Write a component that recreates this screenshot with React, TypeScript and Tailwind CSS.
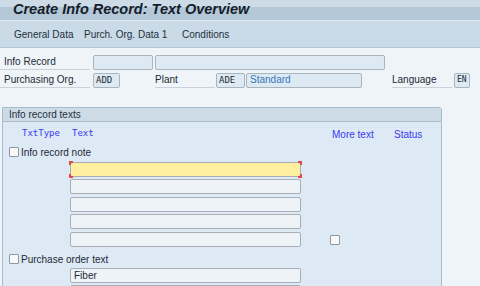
const sans = "font-['Liberation_Sans',Arial,sans-serif]";
const mono = "font-['DejaVu_Sans_Mono','Liberation_Mono',monospace]";

function Field({ w, tone = "edit", children }: { w: string; tone?: "edit" | "display" | "focus"; children?: any }) {
  const bg =
    tone === "display"
      ? "bg-[#dde9f3] border-[#aab4bd]"
      : tone === "focus"
      ? "bg-[#fff0a0] border-[#a8aeb4]"
      : "bg-[#eef3f7] border-[#a8aeb4]";
  return (
    <div className={`relative h-[15px] ${w} shrink-0 border rounded-[2px] ${bg} flex items-center px-[2px] text-[10px] leading-none`}>
      {children}
      {tone === "focus" && (
        <>
          <span className="absolute -left-[2px] -top-[2px] w-[4px] h-[4px] border-t-2 border-l-2 border-[#e04848]" />
          <span className="absolute -right-[2px] -top-[2px] w-[4px] h-[4px] border-t-2 border-r-2 border-[#e04848]" />
          <span className="absolute -left-[2px] -bottom-[2px] w-[4px] h-[4px] border-b-2 border-l-2 border-[#e04848]" />
          <span className="absolute -right-[2px] -bottom-[2px] w-[4px] h-[4px] border-b-2 border-r-2 border-[#e04848]" />
        </>
      )}
    </div>
  );
}

function Check() {
  return <div className="w-[10px] h-[10px] shrink-0 border border-[#8d98a2] bg-[#f7f9fb] rounded-[1px]" />;
}

function Label({ w, children }: { w: string; children: any }) {
  return (
    <div className={`${w} shrink-0 h-[16px] flex items-center border-b border-[#c9d2da] text-[10px] text-[#1c2a36]`}>
      {children}
    </div>
  );
}

export default function App() {
  return (
    <div className={`w-[480px] h-[286px] overflow-hidden bg-[#eff4f8] ${sans} text-[#1c2a36]`}>
      {/* TITLE */}
      <div className="h-[21px] border-b border-[#e4ecf2] bg-[linear-gradient(to_bottom,#cddbe7_0px,#cddbe7_7px,#b4c8d8_7px,#b4c8d8_20px)] flex items-center pl-[13px]">
        <span className="text-[14.5px] font-bold italic text-[#15202b] leading-none -mt-[2px]">
          Create Info Record: Text Overview
        </span>
      </div>

      {/* TOOLBAR */}
      <div className="h-[27px] bg-[#cadae6] border-b border-[#b5c7d6] flex items-center pl-[14px] text-[10px] text-[#23313e]">
        <span className="w-[70px]">General Data</span>
        <span className="w-[98px]">Purch. Org. Data 1</span>
        <span>Conditions</span>
      </div>

      {/* HEADER FIELDS */}
      <div className="pt-[6px] flex flex-col gap-[2px]">
        <div className="flex items-center h-[16px]">
          <Label w="w-[90px] pl-[4px]">Info Record</Label>
          <div className="ml-[3px]"><Field w="w-[60px]" tone="display" /></div>
          <div className="ml-[2px]"><Field w="w-[230px]" tone="display" /></div>
        </div>
        <div className="flex items-center h-[16px]">
          <Label w="w-[90px] pl-[4px]">Purchasing Org.</Label>
          <div className="ml-[3px]">
            <Field w="w-[27px]" tone="display"><span className={`${mono} text-[9px] text-[#1c2a36]`}>ADD</span></Field>
          </div>
          <div className="ml-[35px]"><Label w="w-[60px]">Plant</Label></div>
          <div className="ml-[1px]">
            <Field w="w-[29px]" tone="display"><span className={`${mono} text-[9px] text-[#1c2a36]`}>ADE</span></Field>
          </div>
          <div className="ml-[1px]">
            <Field w="w-[116px]" tone="display"><span className="text-[#3a76b8] pl-[1px]">Standard</span></Field>
          </div>
          <div className="ml-[30px]"><Label w="w-[60px]">Language</Label></div>
          <div className="ml-[2px]">
            <Field w="w-[16px]" tone="display"><span className={`${mono} text-[8px] text-[#1c2a36]`}>EN</span></Field>
          </div>
        </div>
      </div>

      {/* TEXT PANEL */}
      <div className="mt-[19px] ml-[2px] w-[440px] border border-[#a9bccb] rounded-tr-[3px] bg-[#dde9f4] pb-[20px]">
        <div className="h-[14px] bg-[#cddbe7] border-b border-[#a9bccb] flex items-center pl-[6px] text-[10px] text-[#1f2f3f] rounded-tr-[3px]">
          Info record texts
        </div>

        <div className="mt-[5px] h-[14px] flex items-center text-[#3a3af2]">
          <span className={`${mono} text-[9px] ml-[19px] w-[50px]`}>TxtType</span>
          <span className={`${mono} text-[9px] w-[260px]`}>Text</span>
          <span className="text-[10px] w-[62px]">More text</span>
          <span className="text-[10px]">Status</span>
        </div>

        <div className="mt-[5px] h-[12px] flex items-center pl-[6px]">
          <Check />
          <span className="ml-[2px] text-[10px]">Info record note</span>
        </div>

        <div className="mt-[4px] pl-[67px] flex flex-col">
          <Field w="w-[231px]" tone="focus" />
          <div className="mt-[2px]"><Field w="w-[231px]" /></div>
          <div className="mt-[3px]"><Field w="w-[231px]" /></div>
          <div className="mt-[2px]"><Field w="w-[231px]" /></div>
          <div className="mt-[3px] flex items-center">
            <Field w="w-[231px]" />
            <div className="ml-[29px]"><Check /></div>
          </div>
        </div>

        <div className="mt-[6px] h-[12px] flex items-center pl-[6px]">
          <Check />
          <span className="ml-[2px] text-[10px]">Purchase order text</span>
        </div>

        <div className="mt-[3px] pl-[67px] flex flex-col">
          <Field w="w-[231px]"><span className="pl-[1px] text-[#1c2a36]">Fiber</span></Field>
          <div className="mt-[2px]"><Field w="w-[231px]" /></div>
        </div>
      </div>
    </div>
  );
}
